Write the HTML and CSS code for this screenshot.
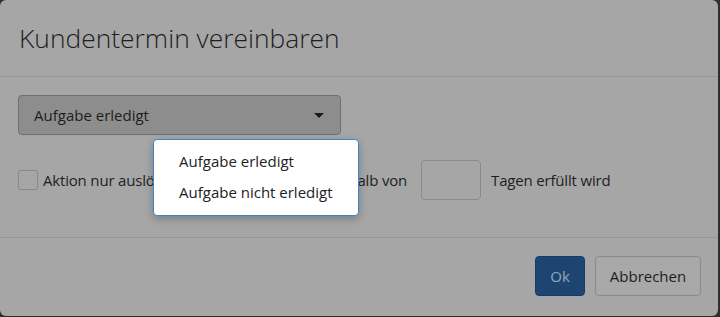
FILE: index.html
```html
<!DOCTYPE html>
<html lang="de">
<head>
  <meta charset="UTF-8">
  <title>Kundentermin vereinbaren</title>
  <link rel="stylesheet" href="styles.css">
</head>
<body>
  <div class="modal">
    <header class="modal-header">
      <h1>Kundentermin vereinbaren</h1>
    </header>

    <section class="modal-body">
      <div class="select">
        <span>Aufgabe erledigt</span>
        <span class="caret"></span>
      </div>

      <div class="condition">
        <span class="checkbox"></span>
        <span class="label">Aktion nur auslösen, wenn die Aufgabe innerhalb von</span>
        <span class="days"></span>
        <span class="label">Tagen erfüllt wird</span>
      </div>
    </section>

    <footer class="modal-footer">
      <button class="btn btn-primary">Ok</button>
      <button class="btn">Abbrechen</button>
    </footer>

    <ul class="menu">
      <li>Aufgabe erledigt</li>
      <li>Aufgabe nicht erledigt</li>
    </ul>
  </div>
</body>
</html>
```

FILE: styles.css
```css
body {
  margin: 0;
  background: #2e2e2e;
  font-family: "Open Sans", sans-serif;
  color: #1e1e1e;
}
.modal {
  position: relative;
  width: 718px;
  height: 316px;
  background: #a6a6a6;
  border-radius: 6px;
  overflow: hidden;
}
.modal-header {
  height: 77px;
  box-sizing: border-box;
  padding: 0 19px;
  border-bottom: 1px solid #979797;
  display: flex;
  align-items: center;
}
.modal-header h1 {
  margin: 0 0 1px;
  font-size: 26.4px;
  font-weight: 300;
}
.modal-body {
  padding: 18px 18px 0;
  height: 161px;
  box-sizing: border-box;
  border-bottom: 1px solid #979797;
}
.select {
  width: 323px;
  height: 40px;
  box-sizing: border-box;
  padding: 0 15px;
  background: #8d8d8d;
  border: 1px solid #6f6f6f;
  border-radius: 4px;
  display: flex;
  align-items: center;
  justify-content: space-between;
  font-size: 15px;
}
.caret {
  width: 0;
  height: 0;
  margin-right: 1px;
  border-left: 5px solid transparent;
  border-right: 5px solid transparent;
  border-top: 5px solid #1a1a1a;
}
.condition {
  margin-top: 25px;
  display: flex;
  align-items: center;
  font-size: 15px;
  white-space: nowrap;
}
.condition .label {
  letter-spacing: -0.18px;
}
.checkbox {
  width: 20px;
  height: 20px;
  box-sizing: border-box;
  border: 1px solid #888;
  border-radius: 3px;
  margin-right: 5px;
}
.days {
  width: 60px;
  height: 40px;
  box-sizing: border-box;
  border: 1px solid #8a8a8a;
  border-radius: 4px;
  margin: 0 10px 0 14px;
}
.modal-footer {
  display: flex;
  justify-content: flex-end;
  gap: 10px;
  padding: 18px 17px 0;
}
.btn {
  width: 106px;
  height: 40px;
  padding: 0;
  font-family: inherit;
  font-size: 15px;
  color: #1e1e1e;
  background: #a8a8a8;
  border: 1px solid #8a8a8a;
  border-radius: 4px;
}
.btn-primary {
  width: 50px;
  background: #1e4571;
  border-color: #183b62;
  color: #93a6bd;
}
.menu {
  position: absolute;
  left: 153px;
  top: 139px;
  width: 206px;
  height: 77px;
  box-sizing: border-box;
  margin: 0;
  padding: 6px 0;
  list-style: none;
  background: #fff;
  border: 1px solid #3d86c6;
  border-radius: 4px;
  box-shadow: 0 3px 8px rgba(0, 0, 0, 0.25);
  font-size: 15px;
  color: #222;
  white-space: nowrap;
}
.menu li {
  padding: 0 25px;
  line-height: 31px;
}
```
